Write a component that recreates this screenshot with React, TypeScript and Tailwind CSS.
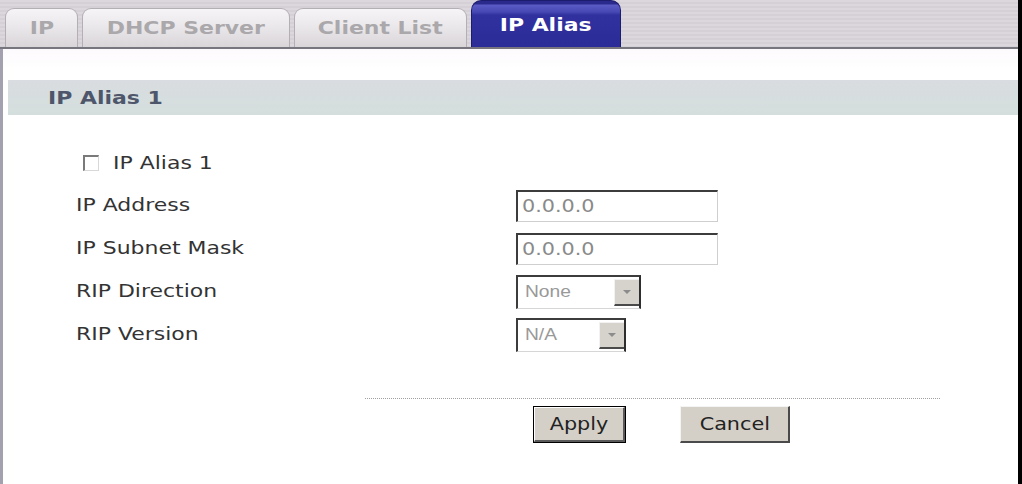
import React from "react";

const S = ({ children, className = "" }: { children: React.ReactNode; className?: string }) => (
  <span className={"inline-block scale-x-[1.22] " + className}>{children}</span>
);

const Tab = ({ label, w }: { label: string; w: string }) => (
  <div
    className={
      "h-[39px] flex items-center justify-center rounded-t-[9px] border border-b-0 border-[#b3afb5] bg-[linear-gradient(180deg,#f6f4f6_0%,#ebe8eb_45%,#d9d5d9_100%)] " +
      w
    }
  >
    <S className="origin-center text-[18px] font-bold text-[#aaa8ab] leading-none">{label}</S>
  </div>
);

const Field = ({ w, value }: { w: string; value: string }) => (
  <div
    className={
      "h-[32px] flex items-center bg-white border-t-2 border-l-2 border-r border-b border-t-[#3c3c3c] border-l-[#3c3c3c] border-r-[#cfcfcf] border-b-[#cfcfcf] pl-[4px] " +
      w
    }
  >
    <S className="origin-left text-[17px] text-[#8a8a8a] leading-none">{value}</S>
  </div>
);

const Select = ({ w, value }: { w: string; value: string }) => (
  <div
    className={
      "h-[34px] flex items-stretch bg-white border-t-2 border-l-2 border-r-2 border-b border-t-[#3c3c3c] border-l-[#3c3c3c] border-r-[#2e2e2e] border-b-[#d6d6d6] " +
      w
    }
  >
    <div className="flex-1 flex items-center pl-[7px]">
      <span
        className="inline-block origin-left scale-x-[1.2] text-[16px] text-[#999999] leading-none"
        style={{ fontFamily: '"Liberation Sans", Arial, sans-serif' }}
      >
        {value}
      </span>
    </div>
    <div className="w-[25px] my-[2px] flex items-center justify-center bg-[#d6d3cd] border-b-2 border-b-[#4a4a4a] border-t border-l border-t-[#f2f2f2] border-l-[#f2f2f2]">
      <svg width="10" height="6" viewBox="0 0 10 6">
        <path d="M1 1 L9 1 L5 5 Z" fill="#8c8c8c" />
      </svg>
    </div>
  </div>
);

const Row = ({ label, children }: { label: string; children: React.ReactNode }) => (
  <div className="h-[43px] flex items-center pl-[73px]">
    <div className="w-[440px]">
      <S className="origin-left text-[18px] text-[#333333] leading-none">{label}</S>
    </div>
    {children}
  </div>
);

export default function App() {
  return (
    <div
      className="w-[1022px] h-[484px] flex bg-white overflow-hidden"
      style={{ fontFamily: '"DejaVu Sans", Verdana, sans-serif' }}
    >
      <div className="flex-1 flex flex-col">
        {/* tab bar */}
        <div className="h-[47px] flex items-end gap-[4px] pl-[5px] bg-[repeating-linear-gradient(180deg,#dcd7dc_0px,#dcd7dc_2px,#d5d0d6_2px,#d5d0d6_4px)]">
          <Tab label="IP" w="w-[73px]" />
          <Tab label="DHCP Server" w="w-[208px]" />
          <Tab label="Client List" w="w-[173px]" />
          <div className="w-[150px] h-[47px] rounded-t-[10px] border border-b-0 border-[#1d1d6e] bg-[linear-gradient(180deg,#2a2a8c_0px,#2a2a8c_3px,#5b5bc6_4px,#4848b4_11px,#30309f_14px,#2c2c98_100%)] flex items-center justify-center pt-[2px]">
            <S className="origin-center text-[18px] font-bold text-white leading-none">IP Alias</S>
          </div>
        </div>
        <div className="h-[2px] bg-[#77757d]" />
        {/* content */}
        <div className="flex-1 flex flex-col border-l-[3px] border-[#a3a1b0] bg-[linear-gradient(180deg,#fdfafd_0px,#ffffff_20px)]">
          <div className="mt-[31px] ml-[5px] h-[35px] flex items-center pl-[40px] bg-[linear-gradient(180deg,#d9dce0_0%,#d4dfdd_100%)]">
            <S className="origin-left text-[18px] font-bold text-[#4d566a] leading-none">IP Alias 1</S>
          </div>

          <div className="mt-[26px] flex flex-col">
            <div className="h-[43px] flex items-center pl-[80px]">
              <div className="w-[16px] h-[16px] bg-white border-t-2 border-l-2 border-r border-b border-t-[#7a7a7a] border-l-[#7a7a7a] border-r-[#d8d8d8] border-b-[#d8d8d8] mr-[14px]" />
              <S className="origin-left text-[18px] text-[#333333] leading-none">IP Alias 1</S>
            </div>
            <Row label="IP Address">
              <Field w="w-[202px]" value="0.0.0.0" />
            </Row>
            <Row label="IP Subnet Mask">
              <Field w="w-[202px]" value="0.0.0.0" />
            </Row>
            <Row label="RIP Direction">
              <Select w="w-[125px]" value="None" />
            </Row>
            <Row label="RIP Version">
              <Select w="w-[110px]" value="N/A" />
            </Row>
          </div>

          <div className="mt-[42px] ml-[362px] w-[575px] border-t border-dotted border-[#a0a0a0]" />

          <div className="mt-[7px] flex items-start pl-[530px] gap-[54px]">
            <div className="w-[93px] h-[37px] border border-black bg-[#d4d0c8]">
              <div className="w-full h-full flex items-center justify-center border-t border-l border-t-white border-l-white border-b-2 border-r-2 border-b-[#5a5a5a] border-r-[#5a5a5a]">
                <S className="origin-center text-[17px] text-[#222222] leading-none">Apply</S>
              </div>
            </div>
            <div className="w-[110px] h-[37px] flex items-center justify-center bg-[#d4d0c8] border-t border-l border-t-[#f4f4f4] border-l-[#f4f4f4] border-b-2 border-r-2 border-b-[#4a4a4a] border-r-[#4a4a4a]">
              <S className="origin-center text-[17px] text-[#222222] leading-none">Cancel</S>
            </div>
          </div>
        </div>
      </div>
      <div className="w-[4px] bg-black" />
    </div>
  );
}
